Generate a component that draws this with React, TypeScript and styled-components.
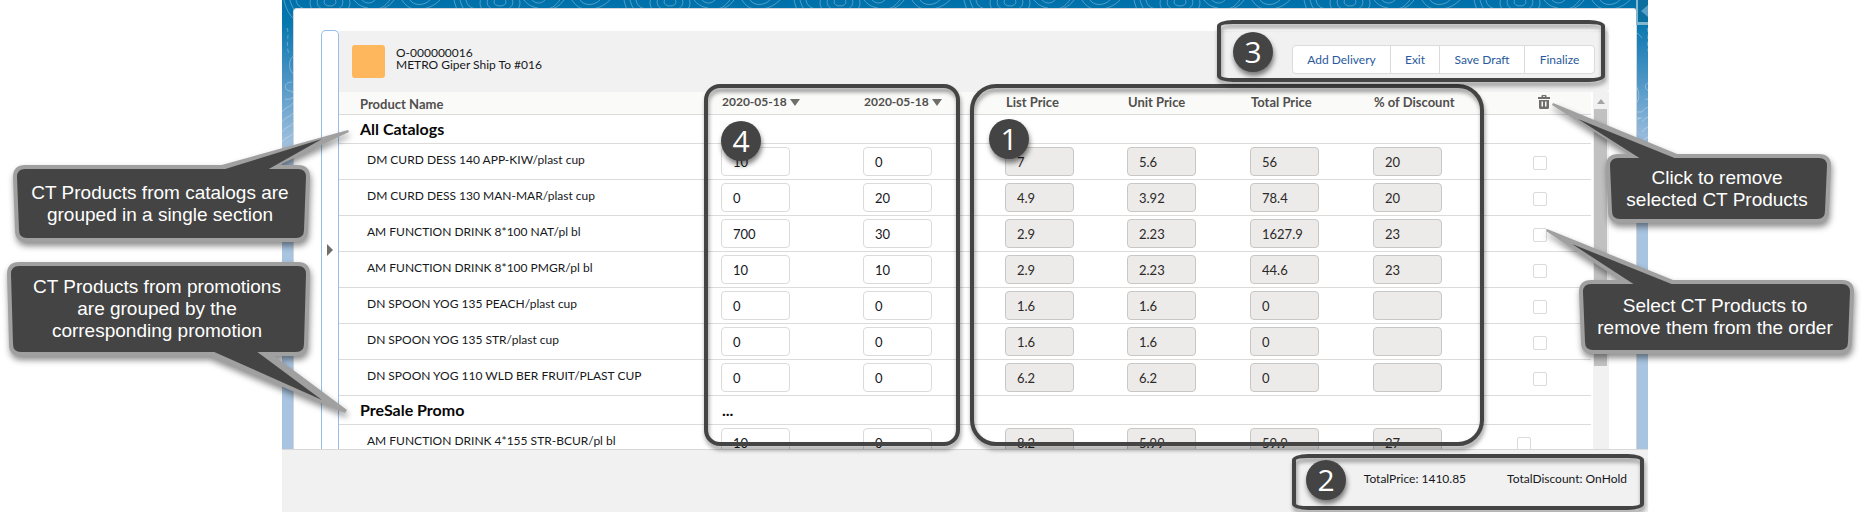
import React from "react";
import styled, { createGlobalStyle } from "styled-components";

const uiFont = 'Lato, "Open Sans", sans-serif';
const noteFont = '"Liberation Sans", Arial, sans-serif';

const GlobalStyle = createGlobalStyle`
  *, *::before, *::after { box-sizing: border-box; }
  body { margin: 0; background: #fff; font-family: ${uiFont}; font-size: 12px; color: #16181b; }
  p { margin: 0; }
`;

/* ---------- page shell ---------- */

const Page = styled.div`
  position: relative;
  padding: 0 224px 0 282px;
  overflow: hidden;
`;

const Screen = styled.div`
  position: relative;
  display: flex;
  flex-direction: column;
  height: 100vh;
`;

const Backdrop = styled.div`
  position: relative;
  display: flex;
  flex: 1;
  min-height: 0;
  padding: 8px 11px 0;
  overflow: hidden;
  background: linear-gradient(#0070aa 0, #0878b0 24px, #4c95c6 80px, #a9c4e0 150px);
`;

const Contours = styled.svg`
  position: absolute;
  top: 0;
  left: 0;
  width: 100%;
  height: 150px;
`;

const DrawerHandle = styled.button`
  position: absolute;
  top: 0;
  right: 0;
  width: 12px;
  height: 25px;
  padding: 0;
  border: solid rgba(255, 255, 255, 0.5);
  border-width: 0 0 3px 2px;
  background: #0b6f9f;
  svg { display: block; margin-left: 3px; }
`;

const Card = styled.main`
  position: relative;
  display: flex;
  flex: 1;
  min-width: 0;
  padding: 21px 27px 0 27px;
  border: 1px solid #d2d6db;
  border-bottom: 0;
  border-radius: 4px 4px 0 0;
  background: #fff;
`;

const SideTab = styled.button`
  display: flex;
  align-items: center;
  flex: none;
  width: 18px;
  padding: 0 0 0 4px;
  border: 1px solid #93bfe8;
  border-bottom: 0;
  border-radius: 5px 5px 0 0;
  background: #fff;
  svg { margin-top: 20px; }
`;

const Order = styled.section`
  display: flex;
  flex: 1;
  flex-direction: column;
  min-width: 0;
  margin-top: 1px;
`;

const OrderHeader = styled.header`
  display: flex;
  flex: none;
  height: 61px;
  padding: 14px 14px 0 13px;
  border-radius: 0 4px 4px 0;
  background: #f1f1f1;
`;

const OrderIcon = styled.div`
  width: 33px;
  height: 33px;
  border-radius: 3px;
  background: #ffb75d;
`;

const OrderTitle = styled.div`
  flex: 1;
  padding: 2px 0 0 11px;
  line-height: 12px;
`;

const ButtonGroup = styled.div`
  display: flex;
  height: 29px;
`;

const ActionButton = styled.button<{ $width: number }>`
  width: ${(p) => p.$width}px;
  margin-left: -1px;
  padding: 0;
  border: 1px solid #dddbda;
  background: #fff;
  color: #2a5a9c;
  font: 12px ${uiFont};
  &:first-child { border-radius: 4px 0 0 4px; }
  &:last-child { border-radius: 0 4px 4px 0; }
`;

/* ---------- product table ---------- */

const ListArea = styled.div`
  display: flex;
  flex: 1;
  min-height: 0;
  overflow: hidden;
`;

const ProductTable = styled.table`
  flex: 1;
  align-self: flex-start;
  min-width: 0;
  border-spacing: 0;
  table-layout: fixed;
`;

const HeadCell = styled.th`
  height: 23px;
  padding: 0 0 2px 17px;
  border-bottom: 1px solid #dddbda;
  background: #fafaf9;
  color: #514f4d;
  font-size: 13px;
  font-weight: 700;
  line-height: 18px;
  text-align: left;
  white-space: nowrap;
`;

const NameHead = styled(HeadCell)`
  padding: 2px 0 0 21px;
`;

const SortButton = styled.button`
  display: flex;
  align-items: center;
  gap: 3px;
  padding: 0;
  border: 0;
  background: none;
  color: inherit;
  font: 700 12px/18px ${uiFont};
`;

const TrashButton = styled.button`
  display: block;
  margin-left: 4px;
  padding: 0;
  border: 0;
  background: none;
  svg { display: block; }
`;

const GroupCell = styled.td`
  height: 29px;
  padding: 0 0 0 17px;
  border-bottom: 1px solid #dddbda;
  color: #080707;
  font-size: 16px;
  font-weight: 700;
  line-height: 20px;
`;

const GroupName = styled.th`
  padding: 0 0 0 21px;
  border-bottom: 1px solid #dddbda;
  color: #080707;
  font-size: 16px;
  font-weight: 700;
  line-height: 20px;
  text-align: left;
`;

const Cell = styled.td`
  height: 36px;
  padding: 3px 0 0 16px;
  border-bottom: 1px solid #dddbda;
  vertical-align: top;
`;

const NameCell = styled(Cell)`
  padding: 7px 0 0 28px;
  line-height: 18px;
  white-space: nowrap;
`;

const SelectCell = styled(Cell)<{ $outdent?: boolean }>`
  padding: 12px 0 0 ${(p) => (p.$outdent ? 0 : 16)}px;
`;

const ValueInput = styled.input`
  display: block;
  width: 69px;
  height: 29px;
  padding: 0 11px;
  border: 1px solid #dddbda;
  border-radius: 4px;
  background: #fff;
  color: #16181b;
  font: 13px ${uiFont};
  &:disabled { border-color: #c9c7c5; background: #ecebea; color: #2b2826; }
`;

const CheckBox = styled.input`
  display: block;
  width: 14px;
  height: 14px;
  margin: 0;
  appearance: none;
  border: 1px solid #dddbda;
  border-radius: 2px;
  background: #fff;
`;

const ScrollTrack = styled.div`
  flex: none;
  width: 16px;
  margin-left: 2px;
  padding: 7px 2px 0 1px;
  background: #f1f1f1;
  svg { display: block; margin: 0 auto 5px; }
`;

const ScrollThumb = styled.div`
  height: 257px;
  background: #c1c1c1;
`;

/* ---------- totals ---------- */

const Totals = styled.footer`
  display: flex;
  flex: none;
  justify-content: flex-end;
  gap: 41px;
  height: 63px;
  padding: 20px 21px 0 0;
  border-top: 1px solid #d8d8d8;
  background: #f1f1f1;
  line-height: 18px;
`;

/* ---------- annotations ---------- */

type Box = { right: number; top: number; width: number; height: number };

const Frame = styled.div<{ $box: Box; $radius: string }>`
  position: absolute;
  right: ${(p) => p.$box.right}px;
  top: ${(p) => p.$box.top}px;
  width: ${(p) => p.$box.width}px;
  height: ${(p) => p.$box.height}px;
  border: 4px solid #444;
  border-radius: ${(p) => p.$radius};
  filter: drop-shadow(1px 4px 2px rgba(0, 0, 0, 0.4));
  pointer-events: none;
`;

const Marker = styled.div<{ $right: number; $top: number }>`
  position: absolute;
  right: ${(p) => p.$right}px;
  top: ${(p) => p.$top}px;
  width: 40px;
  height: 40px;
  border-radius: 50%;
  background: #444;
  box-shadow: 1px 4px 5px rgba(0, 0, 0, 0.5);
  color: #fff;
  font: 30px/40px "Open Sans", sans-serif;
  text-align: center;
`;

const CalloutBox = styled.div<{ $side: "left" | "right"; $inset: number; $top: number; $width: number; $height: number }>`
  position: absolute;
  ${(p) => p.$side}: ${(p) => p.$inset}px;
  top: ${(p) => p.$top}px;
  width: ${(p) => p.$width}px;
  height: ${(p) => p.$height}px;
  display: flex;
  align-items: center;
  justify-content: center;
  padding-right: 3px;
  color: #fff;
  font: 19px/22px ${noteFont};
  text-align: center;
  white-space: pre-line;
  svg {
    position: absolute;
    top: 0;
    left: 0;
    overflow: visible;
    filter: drop-shadow(1px 4px 3px rgba(0, 0, 0, 0.45));
  }
  p { position: relative; }
`;

type CalloutProps = {
  side: "left" | "right";
  inset: number;
  top: number;
  width: number;
  height: number;
  outer: string;
  inner: string;
  children: string;
};

/* A rounded plate slightly narrower at its foot than at its head. */
const plate = (w: number, h: number, pad: number, r: number) => {
  const l = pad, t = pad, R = w - pad, b = h - pad, s = 2;
  return `M${l + r} ${t}H${R - r}Q${R} ${t} ${R} ${t + r}L${R - s} ${b - r}Q${R - s} ${b} ${R - s - r} ${b}H${l + s + r}Q${l + s} ${b} ${l + s} ${b - r}L${l} ${t + r}Q${l} ${t} ${l + r} ${t}Z`;
};

function Callout({ side, inset, top, width, height, outer, inner, children }: CalloutProps) {
  return (
    <CalloutBox $side={side} $inset={inset} $top={top} $width={width} $height={height}>
      <svg width={width} height={height} aria-hidden="true">
        <path d={plate(width, height, 0, 12)} fill="#a0a0a0" />
        <polygon points={outer} fill="#a0a0a0" />
        <path d={plate(width, height, 4, 8)} fill="#444" />
        <polygon points={inner} fill="#444" />
      </svg>
      <p>{children}</p>
    </CalloutBox>
  );
}

/* ---------- data ---------- */

type Product = { name: string; days: [string, string]; prices: [string, string, string, string]; outdent?: boolean };
type Group = { title: string; note?: string; products: Product[] };

const priceLabels = ["List Price", "Unit Price", "Total Price", "% of Discount"];

const groups: Group[] = [
  {
    title: "All Catalogs",
    products: [
      { name: "DM CURD DESS 140 APP-KIW/plast cup", days: ["10", "0"], prices: ["7", "5.6", "56", "20"] },
      { name: "DM CURD DESS 130 MAN-MAR/plast cup", days: ["0", "20"], prices: ["4.9", "3.92", "78.4", "20"] },
      { name: "AM FUNCTION DRINK 8*100 NAT/pl bl", days: ["700", "30"], prices: ["2.9", "2.23", "1627.9", "23"] },
      { name: "AM FUNCTION DRINK 8*100 PMGR/pl bl", days: ["10", "10"], prices: ["2.9", "2.23", "44.6", "23"] },
      { name: "DN SPOON YOG 135 PEACH/plast cup", days: ["0", "0"], prices: ["1.6", "1.6", "0", ""] },
      { name: "DN SPOON YOG 135 STR/plast cup", days: ["0", "0"], prices: ["1.6", "1.6", "0", ""] },
      { name: "DN SPOON YOG 110 WLD BER FRUIT/PLAST CUP", days: ["0", "0"], prices: ["6.2", "6.2", "0", ""] },
    ],
  },
  {
    title: "PreSale Promo",
    note: "...",
    products: [
      { name: "AM FUNCTION DRINK 4*155 STR-BCUR/pl bl", days: ["10", "0"], prices: ["8.2", "5.99", "59.9", "27"], outdent: true },
    ],
  },
];

function ContourPattern() {
  return (
    <Contours aria-hidden="true">
      <defs>
        <pattern id="contours" width="170" height="150" patternUnits="userSpaceOnUse">
          <g fill="none" stroke="#fff" strokeOpacity="0.3">
            <path d="M2 0c2 10 8 22 20 24M8 0c2 8 6 14 14 17M14 0c1 5 4 8 10 9" />
            <ellipse cx="48" cy="3" rx="20" ry="14" />
            <ellipse cx="48" cy="2" rx="13" ry="9" />
            <ellipse cx="48" cy="2" rx="6" ry="4" />
            <path d="M72 0c4 5 8 7 14 8M80 0c4 4 9 4 13 0M92 9c10 0 12-5 16-9M100 9c6-2 10-6 12-9M120 0c3 5 7 8 12 9M128 0c4 6 14 6 20 0M140 9c8-1 14-5 18-9" />
            <path d="M5 28c3 8-2 16 2 26" strokeDasharray="4 3" />
            <path d="M12 56c-6 2-6 16 0 18M10 82c-8 0-9 8-2 9s5 10-5 8M0 112c4-6 8-4 12-10M0 122c4-6 8-4 12-10M0 132c4-6 8-4 12-10M0 142c4-6 8-4 12-10" />
            <path d="M152 34c6-6 14-2 18 4M154 50c8 8 12 18 8 26s-8 2-4-4M158 88c-4 6-2 16 4 16s6-14 2-18M156 112h14M156 118h14M158 126l10-8" />
          </g>
        </pattern>
      </defs>
      <rect width="100%" height="150" fill="url(#contours)" />
    </Contours>
  );
}

function ProductRow({ product }: { product: Product }) {
  return (
    <tr>
      <NameCell>{product.name}</NameCell>
      {product.days.map((value, i) => (
        <Cell key={`day-${i}`}>
          <ValueInput aria-label={`${product.name}, delivery ${i + 1}`} defaultValue={value} />
        </Cell>
      ))}
      {product.prices.map((value, i) => (
        <Cell key={priceLabels[i]}>
          <ValueInput aria-label={`${product.name}, ${priceLabels[i]}`} value={value} disabled readOnly />
        </Cell>
      ))}
      <SelectCell $outdent={product.outdent}>
        <CheckBox type="checkbox" aria-label={`Select ${product.name}`} />
      </SelectCell>
    </tr>
  );
}

export default function App() {
  return (
    <Page>
      <GlobalStyle />
      <Screen>
        <Backdrop>
          <ContourPattern />
          <Card>
            <SideTab aria-label="Expand panel">
              <svg width="8" height="12" aria-hidden="true">
                <path d="M1 0l6 6-6 6z" fill="#706e6b" />
              </svg>
            </SideTab>
            <Order>
              <OrderHeader>
                <OrderIcon />
                <OrderTitle>
                  <p>O-000000016</p>
                  <p>METRO Giper Ship To #016</p>
                </OrderTitle>
                <ButtonGroup>
                  <ActionButton $width={99}>Add Delivery</ActionButton>
                  <ActionButton $width={50}>Exit</ActionButton>
                  <ActionButton $width={86}>Save Draft</ActionButton>
                  <ActionButton $width={71}>Finalize</ActionButton>
                </ButtonGroup>
              </OrderHeader>
              <ListArea>
                <ProductTable>
                  <colgroup>
                    <col />
                    <col width="142" />
                    <col width="142" />
                    <col width="122" />
                    <col width="123" />
                    <col width="123" />
                    <col width="160" />
                    <col width="74" />
                  </colgroup>
                  <thead>
                    <tr>
                      <NameHead>Product Name</NameHead>
                      {[1, 2].map((n) => (
                        <HeadCell key={n}>
                          <SortButton>
                            2020-05-18
                            <svg width="10" height="7" aria-hidden="true">
                              <path d="M0 0h10L5 7z" fill="#706e6b" />
                            </svg>
                          </SortButton>
                        </HeadCell>
                      ))}
                      {priceLabels.map((label) => (
                        <HeadCell key={label}>{label}</HeadCell>
                      ))}
                      <HeadCell>
                        <TrashButton aria-label="Remove selected products">
                          <svg width="12" height="14" viewBox="0 0 12 14">
                            <path d="M0 2h3.500V1q0-1 1-1h3q1 0 1 1v1H12v2H0zM5 1.200V2h2v-.8z" fill="#706e6b" fillRule="evenodd" />
                            <path d="M1 5h10v7.500q0 1.500-1.500 1.500h-7Q1 14 1 12.500zM3.500 6.500v5H5v-5zM7 6.500v5h1.500v-5z" fill="#706e6b" fillRule="evenodd" />
                          </svg>
                        </TrashButton>
                      </HeadCell>
                    </tr>
                  </thead>
                  <tbody>
                    {groups.map((group) => (
                      <React.Fragment key={group.title}>
                        <tr>
                          <GroupName scope="rowgroup">{group.title}</GroupName>
                          <GroupCell colSpan={7}>{group.note}</GroupCell>
                        </tr>
                        {group.products.map((product) => (
                          <ProductRow key={product.name} product={product} />
                        ))}
                      </React.Fragment>
                    ))}
                  </tbody>
                </ProductTable>
                <ScrollTrack>
                  <svg width="8" height="5" aria-hidden="true">
                    <path d="M4 0l4 5H0z" fill="#a3a3a3" />
                  </svg>
                  <ScrollThumb />
                </ScrollTrack>
              </ListArea>
            </Order>
          </Card>
          <DrawerHandle aria-label="Open drawer">
            <svg width="7" height="12" aria-hidden="true">
              <path d="M7 0v12L0 6z" fill="#5aa0c8" />
            </svg>
          </DrawerHandle>
        </Backdrop>
        <Totals>
          <span>TotalPrice: 1410.85</span>
          <span>TotalDiscount: OnHold</span>
        </Totals>

        <Frame $box={{ right: 688, top: 84, width: 256, height: 362 }} $radius="16px" />
        <Frame $box={{ right: 164, top: 84, width: 514, height: 362 }} $radius="26px" />
        <Frame $box={{ right: 43, top: 20, width: 388, height: 62 }} $radius="16px / 6px" />
        <Frame $box={{ right: 4, top: 454, width: 352, height: 56 }} $radius="16px / 6px" />
        <Marker $right={887} $top={121}>4</Marker>
        <Marker $right={619} $top={119}>1</Marker>
        <Marker $right={375} $top={32}>3</Marker>
        <Marker $right={302} $top={460}>2</Marker>
      </Screen>

      <Callout side="left" inset={13} top={165} width={297} height={77}
        outer="205,1 335,-35 336,-33 262,2" inner="209,5 309,-26 254,5">
        {"CT Products from catalogs are\ngrouped in a single section"}
      </Callout>
      <Callout side="left" inset={7} top={262} width={303} height={94}
        outer="200,93 338,151 340,148 266,93" inner="205,89 315,138 249,89">
        {"CT Products from promotions\nare grouped by the\ncorresponding promotion"}
      </Callout>
      <Callout side="right" inset={41} top={154} width={225} height={69}
        outer="28,3 -54,-49 -53,-51 76,2" inner="35,5 -28,-35 71,5">
        {"Click to remove\nselected CT Products"}
      </Callout>
      <Callout side="right" inset={18} top={280} width={275} height={74}
        outer="44,2 -33,-49 -32,-51 99,2" inner="56,5 -7,-36 95,5">
        {"Select CT Products to\nremove them from the order"}
      </Callout>
    </Page>
  );
}
